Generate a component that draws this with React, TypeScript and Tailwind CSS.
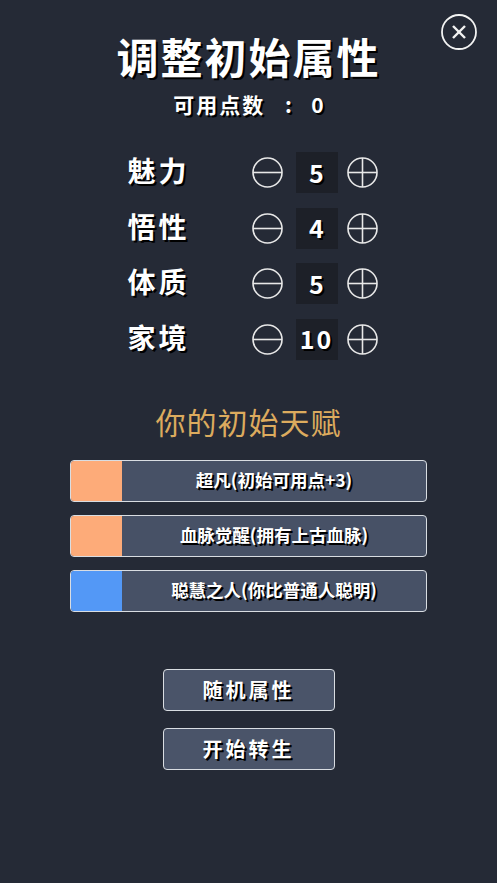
import { useState } from 'react';

const shadow = '[text-shadow:2px_2px_0_#000]';

interface Attr {
  name: string;
  value: number;
}

const initialAttrs: Array<Attr> = [
  { name: '魅力', value: 5 },
  { name: '悟性', value: 4 },
  { name: '体质', value: 5 },
  { name: '家境', value: 10 },
];

const talents = [
  { label: '超凡(初始可用点+3)', color: 'bg-[#fdab79]' },
  { label: '血脉觉醒(拥有上古血脉)', color: 'bg-[#fdab79]' },
  { label: '聪慧之人(你比普通人聪明)', color: 'bg-[#5398f6]' },
];

function CircleButton({ plus }: { plus?: boolean }) {
  return (
    <button className="w-[31px] h-[31px] flex items-center justify-center">
      <svg width="31" height="31" viewBox="0 0 31 31" fill="none" stroke="#e8e8e8" strokeWidth="1.6">
        <circle cx="15.5" cy="15.5" r="14.5" />
        <line x1="1" y1="15.5" x2="30" y2="15.5" />
        {plus && <line x1="15.5" y1="1" x2="15.5" y2="30" />}
      </svg>
    </button>
  );
}

function AttrRow({ name, value }: Attr) {
  return (
    <div className="flex flex-row items-center h-[41px] w-[252px] ml-[10px]">
      <span className={`w-[124px] pb-[5px] text-[28px] font-bold tracking-[3px] text-white leading-none ${shadow}`}>
        {name}
      </span>
      <CircleButton />
      <div
        className={`ml-[13px] mr-[9px] w-[42px] h-[41px] bg-[#1d2028] flex items-center justify-center text-[25px] font-bold text-white ${value >= 10 ? 'tracking-[2px]' : ''} ${shadow}`}
      >
        {value}
      </div>
      <CircleButton plus />
    </div>
  );
}

export default function App() {
  const [attrs] = useState(initialAttrs);
  const points = 0;

  return (
    <div
      className="relative w-full min-h-[883px] bg-[#252a36] flex flex-col items-center"
      style={{ fontFamily: '"Noto Sans CJK SC", "Noto Sans", sans-serif' }}
    >
      <button className="absolute top-[14px] left-[441px] w-[36px] h-[36px]">
        <svg width="36" height="36" viewBox="0 0 36 36" fill="none" stroke="#f2f2f2" strokeWidth="1.8">
          <circle cx="18" cy="18" r="17" />
          <line x1="12" y1="12" x2="24" y2="24" strokeWidth="2.4" />
          <line x1="24" y1="12" x2="12" y2="24" strokeWidth="2.4" />
        </svg>
      </button>

      <h1 className={`mt-[29px] text-[42px] leading-[53px] font-bold tracking-[2px] text-white ${shadow}`}>
        调整初始属性
      </h1>
      <div className={`mt-[7px] flex flex-row text-[21px] leading-[30px] font-bold text-white ${shadow}`}>
        <span className="tracking-[2px]">可用点数</span>
        <span className="w-[46px] text-center">:</span>
        <span>{points}</span>
      </div>

      <div className="mt-[33px] flex flex-col gap-[14.5px]">
        {attrs.map((a) => (
          <AttrRow key={a.name} name={a.name} value={a.value} />
        ))}
      </div>

      <h2 className="mt-[43px] text-[30px] leading-[36px] tracking-[1px] text-[#dcab5e]">你的初始天赋</h2>

      <ul className="mt-[21px] flex flex-col gap-[13px]">
        {talents.map((t) => (
          <li
            key={t.label}
            className="w-[357px] h-[42px] flex flex-row rounded-[4px] border-[1.5px] border-[#d9dde2] bg-[#475166] overflow-hidden"
          >
            <div className={`w-[51px] h-full ${t.color}`} />
            <div className={`flex-1 flex items-center justify-center text-[17.5px] font-bold text-white ${shadow}`}>
              {t.label}
            </div>
          </li>
        ))}
      </ul>

      <div className="mt-[57px] flex flex-col gap-[17px]">
        {['随机属性', '开始转生'].map((label) => (
          <button
            key={label}
            className={`w-[172px] h-[42px] rounded-[4px] border-[1.5px] border-[#d9dde2] bg-[#4a5469] text-[20px] font-bold tracking-[3px] text-white ${shadow}`}
          >
            {label}
          </button>
        ))}
      </div>
    </div>
  );
}
